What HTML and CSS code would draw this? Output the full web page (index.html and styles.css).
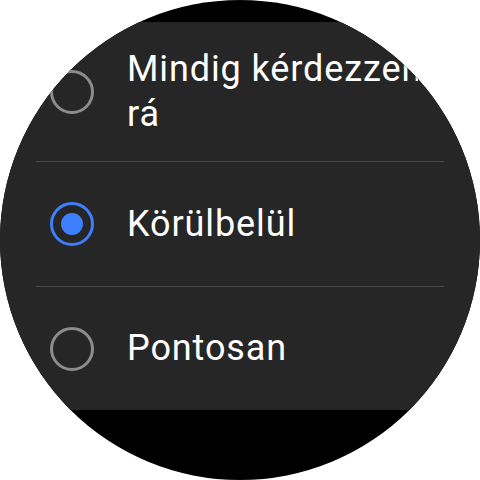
FILE: index.html
```html
<!DOCTYPE html>
<html lang="hu">
<head>
  <meta charset="UTF-8">
  <meta name="viewport" content="width=device-width, initial-scale=1.0">
  <title>Pontosság</title>
  <link rel="stylesheet" href="styles.css">
</head>
<body>
  <div class="watch">
    <div class="list">
      <div class="option option-tall">
        <span class="radio"></span>
        <div class="label"><span>Mindig kérdezzen rá</span></div>
      </div>
      <div class="divider"></div>
      <div class="option">
        <span class="radio checked"></span>
        <div class="label"><span>Körülbelül</span></div>
      </div>
      <div class="divider"></div>
      <div class="option option-last">
        <span class="radio"></span>
        <div class="label"><span>Pontosan</span></div>
      </div>
    </div>
  </div>
</body>
</html>
```

FILE: styles.css
```css
* { box-sizing: border-box; }
body {
  margin: 0;
  background: #fff;
  font-family: 'Roboto', sans-serif;
}
.watch {
  width: 480px;
  height: 480px;
  border-radius: 50%;
  background: #000;
  overflow: hidden;
  padding-top: 22px;
}
.list {
  background: #262626;
  color: #fff;
}
.option {
  height: 124px;
  display: flex;
  align-items: center;
  padding-left: 50px;
  gap: 33px;
}
.option-tall {
  height: 139px;
}
.option-last {
  height: 123px;
}
.radio {
  flex: none;
  width: 44px;
  height: 44px;
  border-radius: 50%;
  border: 3px solid #8c8c8c;
  display: flex;
  align-items: center;
  justify-content: center;
}
.radio.checked {
  border-color: #3d7ffc;
}
.radio.checked::after {
  content: '';
  width: 22px;
  height: 22px;
  border-radius: 50%;
  background: #3d7ffc;
}
.label {
  width: 291px;
  overflow: hidden;
  font-size: 36px;
  letter-spacing: 0.9px;
  line-height: 45px;
}
.label span {
  display: block;
  width: 330px;
}
.divider {
  height: 1px;
  margin: 0 36px;
  background: #4a4a4a;
}
```
